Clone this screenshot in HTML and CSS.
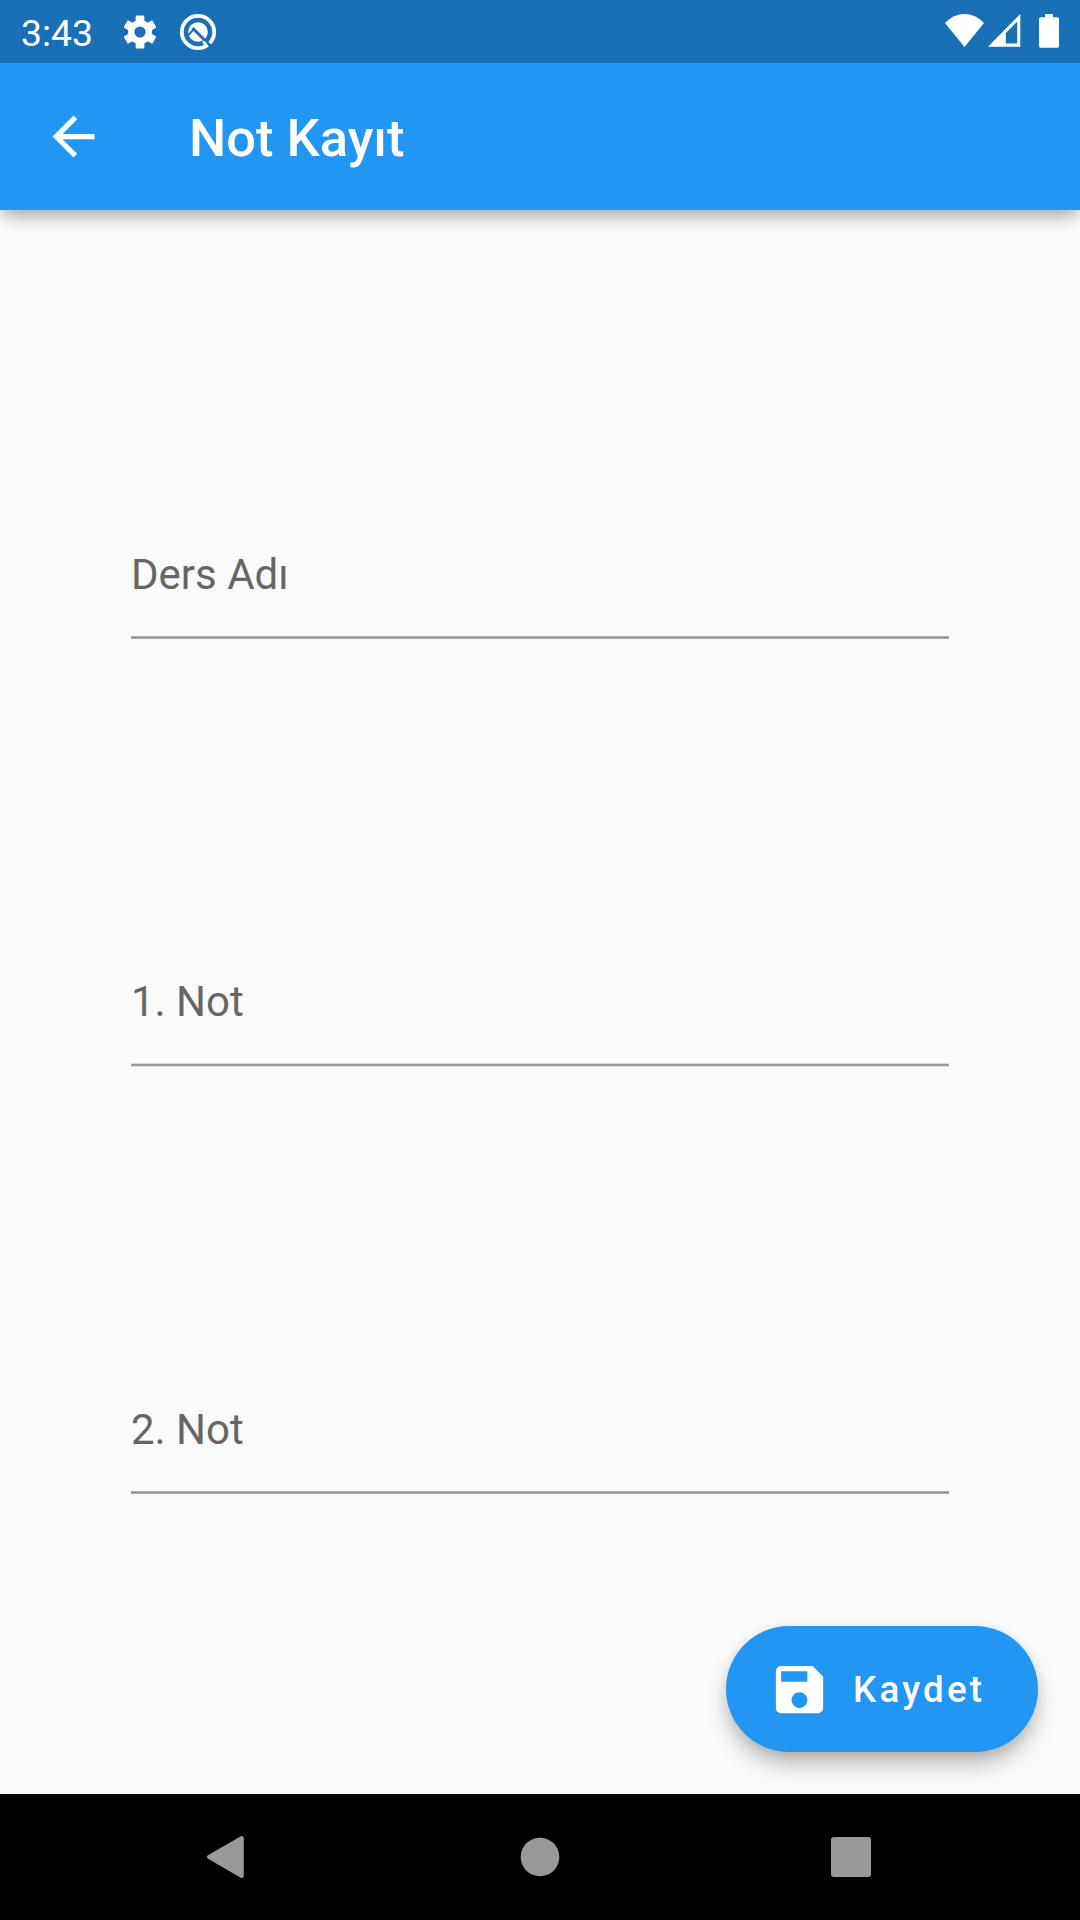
FILE: index.html
```html
<!DOCTYPE html>
<html lang="tr">
<head>
<meta charset="utf-8">
<title>Not Kayıt</title>
<link rel="stylesheet" href="styles.css">
</head>
<body>
<div class="screen">
  <div class="status-bar">
    <span class="clock">3:43</span>
    <svg class="status-gear" viewBox="-17 -17 34 34" width="34" height="34">
      <g fill="#fff">
        <rect x="-4.3" y="-16.5" width="8.6" height="33" rx="1.2"/>
        <rect x="-4.3" y="-16.5" width="8.6" height="33" rx="1.2" transform="rotate(60)"/>
        <rect x="-4.3" y="-16.5" width="8.6" height="33" rx="1.2" transform="rotate(120)"/>
        <circle r="12"/>
      </g>
      <circle r="5.6" fill="#1a70b7"/>
    </svg>
    <svg class="status-q" viewBox="-19 -19 38 38" width="38" height="38">
      <circle r="16.2" fill="none" stroke="#fff" stroke-width="3.8"/>
      <circle r="9.8" fill="#fff"/>
      <path d="M-9.500 3L-4.300-2.800" fill="none" stroke="#1a70b7" stroke-width="2"/>
      <path d="M-5.500-4L13 14.500" fill="none" stroke="#1a70b7" stroke-width="3"/>
      <path d="M5 9.500L8.500 13" stroke="#fff" stroke-width="2.600"/>
    </svg>
    <span class="spacer"></span>
    <svg class="status-wifi" viewBox="0 0 39 33" width="39" height="33">
      <path d="M19.500 33L0 9Q8.500 0 19.500 0T39 9Z" fill="#fff"/>
    </svg>
    <svg class="status-signal" viewBox="0 0 33 33" width="33" height="33">
      <path fill="#fff" fill-rule="evenodd" d="M0 32.700H32.300V0ZM17.800 29.500V19L29.200 7.500V29.500Z"/>
    </svg>
    <svg class="status-battery" viewBox="0 0 20 34" width="20" height="34">
      <path fill="#fff" d="M6 0H14V3.300H18.300Q20 3.300 20 5V32.200Q20 33.800 18.300 33.800H1.700Q0 33.800 0 32.200V5Q0 3.300 1.700 3.300H6Z"/>
    </svg>
  </div>
  <header class="app-bar">
    <svg class="back-icon" viewBox="0 0 24 24" width="63" height="63">
      <path fill="#fff" d="M20 11H7.830l5.590-5.590L12 4l-8 8 8 8 1.410-1.410L7.830 13H20v-2z"/>
    </svg>
    <h1 class="title">Not Kayıt</h1>
  </header>
  <main class="form">
    <div class="field"><span class="label">Ders Adı</span><div class="rule"></div></div>
    <div class="field field-tall"><span class="label">1. Not</span><div class="rule rule-soft"></div></div>
    <div class="field field-last"><span class="label">2. Not</span><div class="rule"></div></div>
    <button class="save-button">
      <svg viewBox="0 0 24 24" width="63" height="63">
        <path fill="#fff" d="M17 3H5c-1.110 0-2 .9-2 2v14c0 1.100.89 2 2 2h14c1.100 0 2-.9 2-2V7l-4-4zm-5 16c-1.660 0-3-1.340-3-3s1.340-3 3-3 3 1.340 3 3-1.340 3-3 3zm3-10H5V5h10v4z"/>
      </svg>
      <span>Kaydet</span>
    </button>
  </main>
  <nav class="nav-bar">
    <svg viewBox="-25 -25 50 50" width="50" height="50">
      <path d="M-20-0L12.800-19V19Z" fill="#999" stroke="#999" stroke-width="4" stroke-linejoin="round"/>
    </svg>
    <svg viewBox="-25 -25 50 50" width="50" height="50"><circle r="19.300" fill="#999"/></svg>
    <svg viewBox="-25 -25 50 50" width="50" height="50"><rect x="-20" y="-20" width="40" height="40" rx="3" fill="#999"/></svg>
  </nav>
</div>
</body>
</html>
```
FILE: styles.css
```css
* { box-sizing: border-box; }

body {
  margin: 0;
  font-family: Roboto, "Noto Sans", sans-serif;
}

.screen {
  display: flex;
  flex-direction: column;
  width: 1080px;
  height: 1920px;
  overflow: hidden;
  background: #fafafa;
}

.status-bar {
  display: flex;
  flex: none;
  align-items: center;
  height: 63px;
  padding: 0 21px;
  background: #1a70b7;
  color: #fff;
  z-index: 2;
}

.clock {
  width: 102px;
  padding-top: 3px;
  font-size: 37.3px;
  line-height: 44px;
}

.status-q { margin-left: 22px; }
.spacer { flex: 1; }
.status-wifi { margin-bottom: 2px; }
.status-signal { margin: 0 18.5px 2px 3.5px; }
.status-battery { margin-bottom: 1px; }

.app-bar {
  display: flex;
  flex: none;
  align-items: center;
  gap: 84px;
  height: 147px;
  padding-left: 42px;
  background: #2196f3;
  color: #fff;
  box-shadow: 0 9px 16px -3px rgba(0, 0, 0, 0.34);
  z-index: 1;
}

.title {
  margin: 0;
  padding-top: 3px;
  font-size: 52.5px;
  font-weight: 500;
  line-height: 62px;
}

.form {
  display: flex;
  flex: 1;
  flex-direction: column;
  padding: 340px 42px 42px;
}

.field {
  flex: none;
  height: 427px;
  margin: 0 89px;
}

.field-tall { height: 428px; }
.field-last { flex: 1; }

.label {
  display: block;
  height: 86px;
  color: #666;
  font-size: 42px;
  line-height: 50px;
}

.rule {
  height: 3px;
  border: solid #adadad;
  border-width: 1px 0;
  background: #959595;
}

.rule-soft {
  height: 4px;
  border-color: #dcdcdc;
  background: #999;
}

.save-button {
  display: flex;
  flex: none;
  align-self: flex-end;
  align-items: center;
  gap: 22.5px;
  width: 312.4px;
  height: 126px;
  padding: 0 0 0 42px;
  border: 0;
  border-radius: 63px;
  background: #2196f3;
  color: #fff;
  font-family: inherit;
  font-size: 36.75px;
  font-weight: 500;
  letter-spacing: 3.15px;
  box-shadow: 0 14px 24px -4px rgba(0, 0, 0, 0.3), 0 2px 12px rgba(0, 0, 0, 0.08);
}

.nav-bar {
  display: flex;
  flex: none;
  align-items: center;
  justify-content: center;
  gap: 261px;
  height: 126px;
  background: #000;
  z-index: 1;
}
```
